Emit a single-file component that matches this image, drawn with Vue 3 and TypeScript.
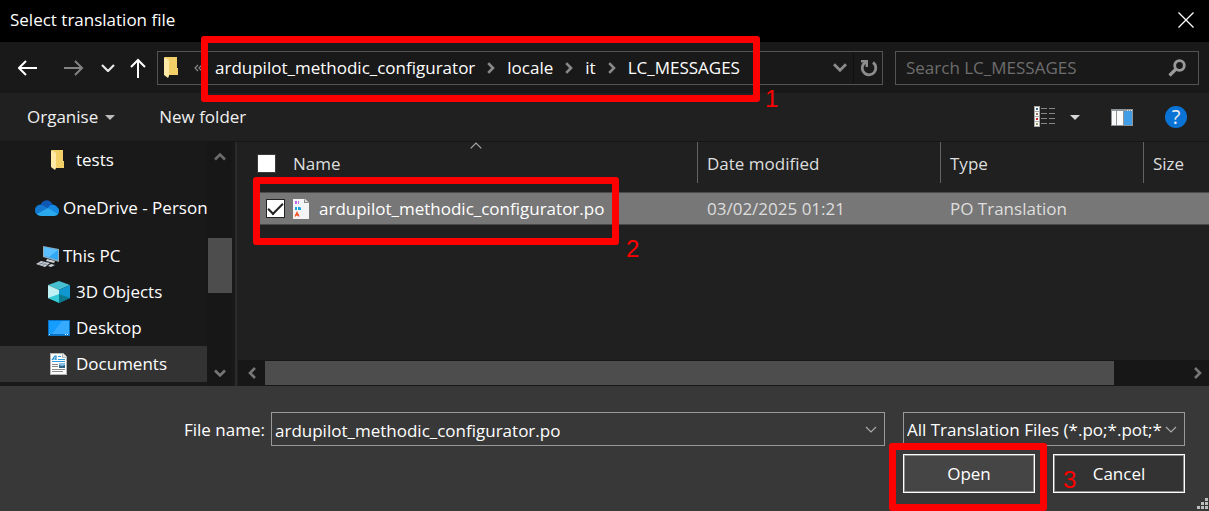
<script setup lang="ts">
import { ref } from 'vue'

interface Place {
  label: string
  icon: 'folder' | 'cloud' | 'pc' | 'cube' | 'desktop' | 'document'
  level: 'root' | 'child'
  groupEnd?: boolean
  selected?: boolean
}

const crumbs: string[] = ['ardupilot_methodic_configurator', 'locale', 'it', 'LC_MESSAGES']

const places: Place[] = [
  { label: 'tests', icon: 'folder', level: 'child', groupEnd: true },
  { label: 'OneDrive - Person', icon: 'cloud', level: 'root', groupEnd: true },
  { label: 'This PC', icon: 'pc', level: 'root' },
  { label: '3D Objects', icon: 'cube', level: 'child' },
  { label: 'Desktop', icon: 'desktop', level: 'child' },
  { label: 'Documents', icon: 'document', level: 'child', selected: true },
]

const fileName = ref('ardupilot_methodic_configurator.po')
const search = ref('')
const allChecked = ref(false)
const rowChecked = ref(true)
</script>

<template>
  <div class="dialog">
    <header class="titlebar">
      <span>Select translation file</span>
      <button class="plain close" aria-label="Close">
        <svg width="16" height="16" viewBox="0 0 16 16"><path d="M.5.5l15 15M15.5.5l-15 15" stroke="#fff" stroke-width="1.3" /></svg>
      </button>
    </header>

    <nav class="navbar">
      <button class="plain back" aria-label="Back">
        <svg width="20" height="16" viewBox="0 0 20 16"><path d="M19 8H1.500M8 1L1 8l7 7" fill="none" stroke="#fff" stroke-width="2" /></svg>
      </button>
      <button class="plain forward" aria-label="Forward">
        <svg width="20" height="16" viewBox="0 0 20 16"><path d="M0 8h18M11 1l7 7-7 7" fill="none" stroke="#838383" stroke-width="2" /></svg>
      </button>
      <button class="plain recent" aria-label="Recent locations">
        <svg width="14" height="8" viewBox="0 0 14 8"><path d="M1 1l6 6 6-6" fill="none" stroke="#e8e8e8" stroke-width="2.2" /></svg>
      </button>
      <button class="plain" aria-label="Up">
        <svg width="16" height="20" viewBox="0 0 16 20"><path d="M8 20V2M1 9l7-7 7 7" fill="none" stroke="#fff" stroke-width="2" /></svg>
      </button>

      <div class="address">
        <svg class="address-folder" width="16" height="22" viewBox="0 0 16 22">
          <path d="M2 0h12v11h1v7H2z" fill="#f3cf68" /><path d="M1 0l5 3v16l-1 2-4-3z" fill="#ffe9a6" />
        </svg>
        <svg class="overflow" width="8" height="8" viewBox="0 0 8 8"><path d="M4 1L1 4l3 3M8 1L5 4l3 3" fill="none" stroke="#8a8a8a" stroke-width="1.2" /></svg>
        <template v-for="(crumb, i) in crumbs" :key="crumb">
          <svg v-if="i > 0" class="sep" width="8" height="12" viewBox="0 0 8 12"><path d="M1.2 1.2L6 6l-4.800 4.800" fill="none" stroke="#8a8a8a" stroke-width="2.600" /></svg>
          <button class="plain crumb">{{ crumb }}</button>
        </template>
        <div class="address-tools">
          <button class="plain" aria-label="Previous locations">
            <svg width="14" height="9" viewBox="0 0 14 9"><path d="M1 1.200l6 6 6-6" fill="none" stroke="#8c8c8c" stroke-width="2.800" /></svg>
          </button>
          <button class="plain refresh" aria-label="Refresh">
            <svg width="18" height="18" viewBox="0 0 18 18"><path d="M13 3.500A6.800 6.800 0 1 1 3.500 5" fill="none" stroke="#8c8c8c" stroke-width="2.800" /><path d="M1 1h7v7H5.600V5L4 6.500 2 5l1.500-1.600H1z" fill="#8c8c8c" /></svg>
          </button>
        </div>
      </div>

      <div class="search">
        <input v-model="search" type="text" placeholder="Search LC_MESSAGES" aria-label="Search LC_MESSAGES" />
        <svg width="18" height="18" viewBox="0 0 18 18"><circle cx="11.500" cy="6.500" r="4.800" fill="none" stroke="#9a9a9a" stroke-width="2.800" /><path d="M8 10l-6.500 6.500" stroke="#9a9a9a" stroke-width="3.200" /></svg>
      </div>
    </nav>

    <div class="toolbar">
      <button class="plain organise">Organise
        <svg width="10" height="5" viewBox="0 0 10 5"><path d="M0 0h10L5 5z" fill="#bcbcbc" /></svg>
      </button>
      <button class="plain">New folder</button>
      <div class="view-tools">
        <button class="plain view" aria-label="View">
          <svg width="22" height="22" viewBox="0 0 22 22">
            <path d="M0 0h6v21H0z" fill="#a9a9a9" />
            <path d="M1 1h4v4H1zM1 6h4v4H1zM1 11h4v4H1zM1 16h4v4H1z" fill="#fff" />
            <path d="M2 2h2v2H2z" fill="#356b91" /><path d="M2 7h2v2H2z" fill="#8c7352" /><path d="M2 12h2v2H2z" fill="#c22" /><path d="M2 17h2v2H2z" fill="#8a9d62" />
            <path d="M7 2.500h6m2 0h6M7 7.500h6m2 0h6M7 12.500h6m2 0h6M7 17.500h6m2 0h6" stroke="#858585" />
          </svg>
        </button>
        <button class="plain view-more" aria-label="More view options">
          <svg width="10" height="5" viewBox="0 0 10 5"><path d="M0 0h10L5 5z" fill="#d6d6d6" /></svg>
        </button>
        <button class="plain preview" aria-label="Show the preview pane">
          <svg width="22" height="17" viewBox="0 0 22 17"><path d="M0 0h22v17H0z" fill="#8f9499" /><path d="M1 2h4v14H1zM6 2h6v14H6z" fill="#fafafa" /><path d="M13 2h8v14h-8z" fill="#419de6" /><path d="M16 1h1v1h-1zM18 1h1v1h-1zM20 1h1v1h-1z" fill="#ddd" /></svg>
        </button>
        <button class="plain help" aria-label="Help">?</button>
      </div>
    </div>

    <main class="main">
      <aside class="sidebar">
        <ul class="places">
          <li v-for="place in places" :key="place.label" :class="[place.level, { gap: place.groupEnd, selected: place.selected }]">
            <svg v-if="place.icon === 'folder'" width="24" height="24" viewBox="0 0 24 24">
              <path d="M5 2h11v11h1v7H5z" fill="#f3cf68" /><path d="M4 2l5 3v15l-1 2-4-3z" fill="#ffe9a6" />
            </svg>
            <svg v-else-if="place.icon === 'cloud'" width="24" height="24" viewBox="0 0 24 24">
              <path d="M5 10C7 3 15 2 18 9l-5 5-8-3z" fill="#0f57b5" /><path d="M0 14c0-4 4-6 7-5l9 5-13 5c-2-1-3-2-3-5z" fill="#1379d0" /><path d="M13 12c2-4 7-4 9-1 3 2 3 6 0 8l-4-1z" fill="#1489df" /><path d="M2 18l11-6 10 6c-1 1-2 2-4 2H6c-2 0-3-1-4-2z" fill="#2aa9ee" />
            </svg>
            <svg v-else-if="place.icon === 'pc'" width="24" height="24" viewBox="0 0 24 24">
              <path d="M8 2l16 3v13L8 13z" fill="#8eaabb" /><path d="M9 3l14 3v10L9 12z" fill="#2fa8f5" /><path d="M9 3l14 3-9 7-5-1z" fill="#5cbfff" /><path d="M12 15l8 2-1 2-8-2zM6 17l9 2-5 4-9-3zM16 20l4 1-4 2-3-1z" fill="#ccd1d8" /><path d="M4 19l9 2M9 18l-5 3M12 18l-5 4" stroke="#67727b" stroke-width=".6" />
            </svg>
            <svg v-else-if="place.icon === 'cube'" width="24" height="24" viewBox="0 0 24 24">
              <path d="M12 1l11 4-11 5L1 5z" fill="#46bfd0" /><path d="M1 5l11 5v12L1 18z" fill="#bff0f3" /><path d="M12 10l11-5v13l-11 5z" fill="#1097d0" /><path d="M1 18l11-4v9z" fill="#35cbd6" /><path d="M12 14l11 4-11 5z" fill="#087b91" />
            </svg>
            <svg v-else-if="place.icon === 'desktop'" width="24" height="24" viewBox="0 0 24 24">
              <path d="M1 4h22v16H1z" fill="#0873c5" /><path d="M2 5h20v13H2z" fill="#159cff" /><path d="M15 5h7v13H5z" fill="#36aaff" /><path d="M2 18.500h1m15 0h1m1 0h1" stroke="#fff" />
            </svg>
            <svg v-else width="24" height="24" viewBox="0 0 24 24">
              <path d="M3 1h13l4 4v18H3z" fill="#b5b5b5" /><path d="M4 2h11v4h4v16H4z" fill="#fff" /><path d="M16 1v4h4z" fill="#e4e4e4" /><path d="M5 8l3-4h1v4M6 7h3" fill="none" stroke="#188bd2" stroke-width="1.200" /><path d="M11 4.500h3M11 7.500h7M5 9.500h13" stroke="#2c9bdd" /><path d="M5 12.500h6M5 14.500h6M5 17.500h13M5 19.500h11" stroke="#8b8b8b" /><path d="M12 11h6v5h-6z" fill="#2f6586" /><path d="M12 11h6v2l-3 1-3-1z" fill="#8ac0e6" />
            </svg>
            <a href="#">{{ place.label }}</a>
          </li>
        </ul>
        <div class="vscroll">
          <svg width="12" height="10" viewBox="0 0 12 10"><path d="M1 7.500l5-5 5 5" fill="none" stroke="#6c6c6c" stroke-width="2.600" /></svg>
          <div class="vtrack"><div class="vthumb"></div></div>
          <svg width="12" height="10" viewBox="0 0 12 10"><path d="M1 2.500l5 5 5-5" fill="none" stroke="#777" stroke-width="2.600" /></svg>
        </div>
      </aside>

      <section class="files">
        <table>
          <colgroup><col class="c-name" /><col class="c-date" /><col class="c-type" /><col /></colgroup>
          <thead>
            <tr>
              <th>
                <div class="name-head">
                  <input v-model="allChecked" type="checkbox" aria-label="Select all" />
                  <span>Name</span>
                  <svg class="sort" width="12" height="7" viewBox="0 0 12 7"><path d="M.7 6.300L6 1l5.300 5.300" fill="none" stroke="#aaa" stroke-width="1.200" /></svg>
                </div>
              </th>
              <th>Date modified</th>
              <th>Type</th>
              <th>Size</th>
            </tr>
          </thead>
          <tbody>
            <tr>
              <td>
                <div class="name-cell">
                  <input id="row-check" v-model="rowChecked" type="checkbox" />
                  <svg width="16" height="22" viewBox="0 0 16 22"><path d="M0 1h12l4 4v16H0z" fill="#f4f4f6" /><path d="M11 1v4h5z" fill="#888" /><path d="M12 1v3h3z" fill="#ddd" /><path d="M2 3h2v3H2zM5 3h1v3H5z" fill="#c568e8" /><path d="M2 9h2v3H2zM5 9h2l1 1v2H5z" fill="#19a2df" /><path d="M2 18.500l2-4 2 4M3 17h3" fill="none" stroke="#f1552b" stroke-width="1.400" /></svg>
                  <label for="row-check">ardupilot_methodic_configurator.po</label>
                </div>
              </td>
              <td>03/02/2025 01:21</td>
              <td>PO Translation</td>
              <td></td>
            </tr>
          </tbody>
        </table>
        <div class="hscroll">
          <svg width="10" height="12" viewBox="0 0 10 12"><path d="M8 1L3 6l5 5" fill="none" stroke="#777" stroke-width="2.600" /></svg>
          <div class="htrack"><div class="hthumb"></div></div>
          <svg width="10" height="12" viewBox="0 0 10 12"><path d="M2 1l5 5-5 5" fill="none" stroke="#777" stroke-width="2.600" /></svg>
        </div>
      </section>
    </main>

    <footer class="footer">
      <label class="file-label" for="file-name">File name:</label>
      <div class="combo file-combo">
        <input id="file-name" v-model="fileName" type="text" />
        <button class="plain" aria-label="Previous file names">
          <svg width="12" height="7" viewBox="0 0 12 7"><path d="M1 1l5 5 5-5" fill="none" stroke="#aaa" stroke-width="1.200" /></svg>
        </button>
      </div>
      <div class="actions">
        <div class="combo type-combo">
          <select aria-label="File type"><option>All Translation Files (*.po;*.pot;*</option></select>
          <svg width="12" height="7" viewBox="0 0 12 7"><path d="M1 1l5 5 5-5" fill="none" stroke="#aaa" stroke-width="1.200" /></svg>
        </div>
        <div class="buttons">
          <button class="push primary">Open</button>
          <button class="push">Cancel</button>
        </div>
      </div>
      <svg class="grip" width="12" height="12" viewBox="0 0 12 12"><path d="M8 0h3v3H8zM4 4h3v3H4zM8 4h3v3H8zM0 8h3v3H0zM4 8h3v3H4zM8 8h3v3H8z" fill="#bdbdbd" /></svg>
    </footer>

    <div class="mark mark-path"><span>1</span></div>
    <div class="mark mark-file"><span>2</span></div>
    <div class="mark mark-open"><span>3</span></div>
  </div>
</template>

<style>
body {
  margin: 0;
  background: #383838;
}
</style>

<style scoped>
.dialog {
  position: relative;
  display: flex;
  flex-direction: column;
  min-height: 100vh;
  overflow: hidden;
  background: #202020;
  color: #fff;
  font: 17px/24px "Open Sans", "Noto Sans", sans-serif;
}
.dialog * {
  box-sizing: border-box;
}
svg {
  display: block;
  flex: none;
}
button, input, select {
  font: inherit;
  color: inherit;
  margin: 0;
}
.plain {
  display: flex;
  align-items: center;
  padding: 0;
  border: 0;
  background: none;
  white-space: nowrap;
}
.titlebar {
  display: flex;
  align-items: center;
  justify-content: space-between;
  height: 42px;
  padding: 0 15px 2px 10px;
  background: #000;
}
.navbar {
  display: flex;
  align-items: center;
  height: 51px;
  padding: 0 10px 0 18px;
  background: #191919;
}
.back { margin-right: 26px; }
.forward { margin-right: 17px; }
.recent { margin-right: 15px; }
.address {
  display: flex;
  flex: 1;
  align-items: center;
  height: 34px;
  margin: 0 12px 0 11px;
  padding-left: 5px;
  border: 1px solid #535353;
}
.address-folder { margin-right: 15px; }
.overflow { margin-right: 13px; }
.sep { margin: 0 12px; }
.address-tools {
  display: flex;
  align-items: center;
  align-self: stretch;
  margin-left: auto;
}
.refresh {
  align-self: stretch;
  margin-left: 6px;
  padding: 0 4px 0 6px;
  border-left: 1px solid #101010;
}
.search {
  display: flex;
  align-items: center;
  width: 304px;
  height: 34px;
  padding: 0 12px 0 10px;
  border: 1px solid #535353;
}
.search input {
  flex: 1;
  min-width: 0;
  padding: 0;
  border: 0;
  outline: 0;
  background: none;
}
.search input::placeholder {
  color: #6d6d6d;
  opacity: 1;
}
.toolbar {
  display: flex;
  align-items: center;
  height: 49px;
  padding: 0 22px 0 27px;
  border-bottom: 1px solid #161616;
  color: #f0f0f0;
}
.organise {
  gap: 7px;
  margin-right: 44px;
}
.view-tools {
  display: flex;
  align-items: center;
  margin-left: auto;
}
.view { margin-right: 14px; }
.view-more { margin-right: 31px; }
.preview { margin-right: 32px; }
.help {
  justify-content: center;
  width: 22px;
  height: 22px;
  border-radius: 50%;
  background: #0a74d6;
  font-size: 20px;
  line-height: 22px;
}
.main {
  display: flex;
  flex: 1;
}
.sidebar {
  display: flex;
  width: 237px;
  padding-right: 3px;
  border-right: 2px solid #2b2b2b;
  background: #191919;
}
.places {
  flex: 1;
  min-width: 0;
  margin: 0;
  padding: 0 0 4px;
  list-style: none;
}
.places li {
  display: flex;
  align-items: center;
  height: 36px;
  white-space: nowrap;
}
.places a {
  color: inherit;
  text-decoration: none;
}
.places .root {
  gap: 4px;
  padding-left: 35px;
}
.places .child {
  gap: 5px;
  padding-left: 47px;
}
.places .gap { margin-bottom: 12px; }
.places .selected { background: #333; }
.vscroll {
  display: flex;
  flex-direction: column;
  align-items: center;
  width: 25px;
  padding: 10px 0 8px;
  background: #171717;
}
.vtrack {
  flex: 1;
  align-self: stretch;
  margin: 8px 0;
}
.vthumb {
  height: 29%;
  margin-top: 68px;
  margin-left: 1px;
  background: #4d4d4d;
}
.files {
  display: flex;
  flex: 1;
  flex-direction: column;
  justify-content: space-between;
  min-width: 0;
}
table {
  width: 100%;
  table-layout: fixed;
  border-collapse: separate;
  border-spacing: 0;
}
.c-name { width: 461px; }
.c-date { width: 243px; }
.c-type { width: 203px; }
th {
  height: 41px;
  padding: 2px 9px 0;
  border-right: 1px solid #636363;
  color: #dedede;
  font-weight: 400;
  text-align: left;
  white-space: nowrap;
}
th:first-child { padding-left: 20px; }
th:last-child { border-right: 0; }
.name-head {
  position: relative;
  display: flex;
  align-items: center;
  gap: 17px;
}
.sort {
  position: absolute;
  top: -10px;
  left: 213px;
}
input[type="checkbox"] {
  appearance: none;
  display: grid;
  flex: none;
  place-items: center;
  width: 19px;
  height: 19px;
  border: 1px solid #3a3a3a;
  background: #fff;
}
input[type="checkbox"]:checked {
  border-color: #222;
}
input[type="checkbox"]:checked::before {
  content: "";
  width: 13px;
  height: 6px;
  margin-bottom: 4px;
  border: solid #222;
  border-width: 0 0 2px 2px;
  transform: rotate(-45deg);
}
tbody::before {
  content: "";
  display: block;
  height: 9px;
}
td {
  height: 33px;
  padding: 1px 9px 0;
  border: solid #4b4b4b;
  border-width: 1px 0;
  background: #777;
  color: #dedede;
  white-space: nowrap;
}
td:first-child {
  padding: 0 0 0 23px;
  border: 0;
  background: none;
}
.name-cell {
  display: flex;
  align-items: center;
  height: 33px;
  padding-left: 6px;
  border: solid #4b4b4b;
  border-width: 1px 0;
  background: #777;
  color: #fff;
}
.name-cell svg {
  margin: 0 10px 0 8px;
}
.hscroll {
  display: flex;
  align-items: center;
  height: 26px;
  margin-left: 1px;
  padding: 0 6px 0 9px;
  background: #171717;
}
.htrack {
  flex: 1;
  align-self: stretch;
  margin: 1px 0 1px 8px;
}
.hthumb {
  width: 91.5%;
  height: 100%;
  background: #4d4d4d;
}
.footer {
  position: relative;
  display: flex;
  align-items: flex-start;
  padding: 26px 24px 18px 184px;
  background: #383838;
}
.file-label {
  width: 87px;
  line-height: 36px;
  white-space: nowrap;
}
.combo {
  display: flex;
  align-items: center;
  height: 34px;
  border: 1px solid #999;
  background: #383838;
}
.file-combo {
  flex: 1;
  margin-right: 18px;
  padding-right: 7px;
}
.file-combo input {
  flex: 1;
  min-width: 0;
  height: 100%;
  padding: 2px 3px 0;
  border: 0;
  outline: 0;
  background: none;
}
.actions {
  display: grid;
  gap: 8px;
  width: 282px;
}
.type-combo {
  position: relative;
}
.type-combo select {
  appearance: none;
  width: 100%;
  height: 100%;
  padding: 2px 20px 0 3px;
  border: 0;
  outline: 0;
  background: none;
}
.type-combo svg {
  position: absolute;
  top: 13px;
  right: 7px;
  pointer-events: none;
}
.buttons {
  display: grid;
  grid-template-columns: 1fr 1fr;
  gap: 18px;
}
.push {
  height: 39px;
  padding: 0;
  border: 1px solid #fff;
  outline: 1px solid #8b8b8b;
  outline-offset: -2px;
  background: #333;
}
.primary { background: #454545; }
.grip {
  position: absolute;
  right: 0;
  bottom: 1px;
}
.mark {
  position: absolute;
  border: 7px solid #f00;
  border-radius: 3px;
  color: #f00;
  font: 24px/24px "Liberation Sans", Arial, sans-serif;
  pointer-events: none;
}
.mark span {
  position: absolute;
  left: 100%;
}
.mark-path {
  top: 36px;
  left: 201px;
  width: 559px;
  height: 66px;
}
.mark-path span {
  top: 44px;
  margin-left: 12px;
}
.mark-file {
  top: 177px;
  left: 253px;
  width: 366px;
  height: 68px;
}
.mark-file span {
  top: 53px;
  margin-left: 14px;
}
.mark-open {
  right: 162px;
  bottom: 0;
  width: 158px;
  height: 68px;
}
.mark-open span {
  top: 18px;
  margin-left: 23px;
}
</style>
